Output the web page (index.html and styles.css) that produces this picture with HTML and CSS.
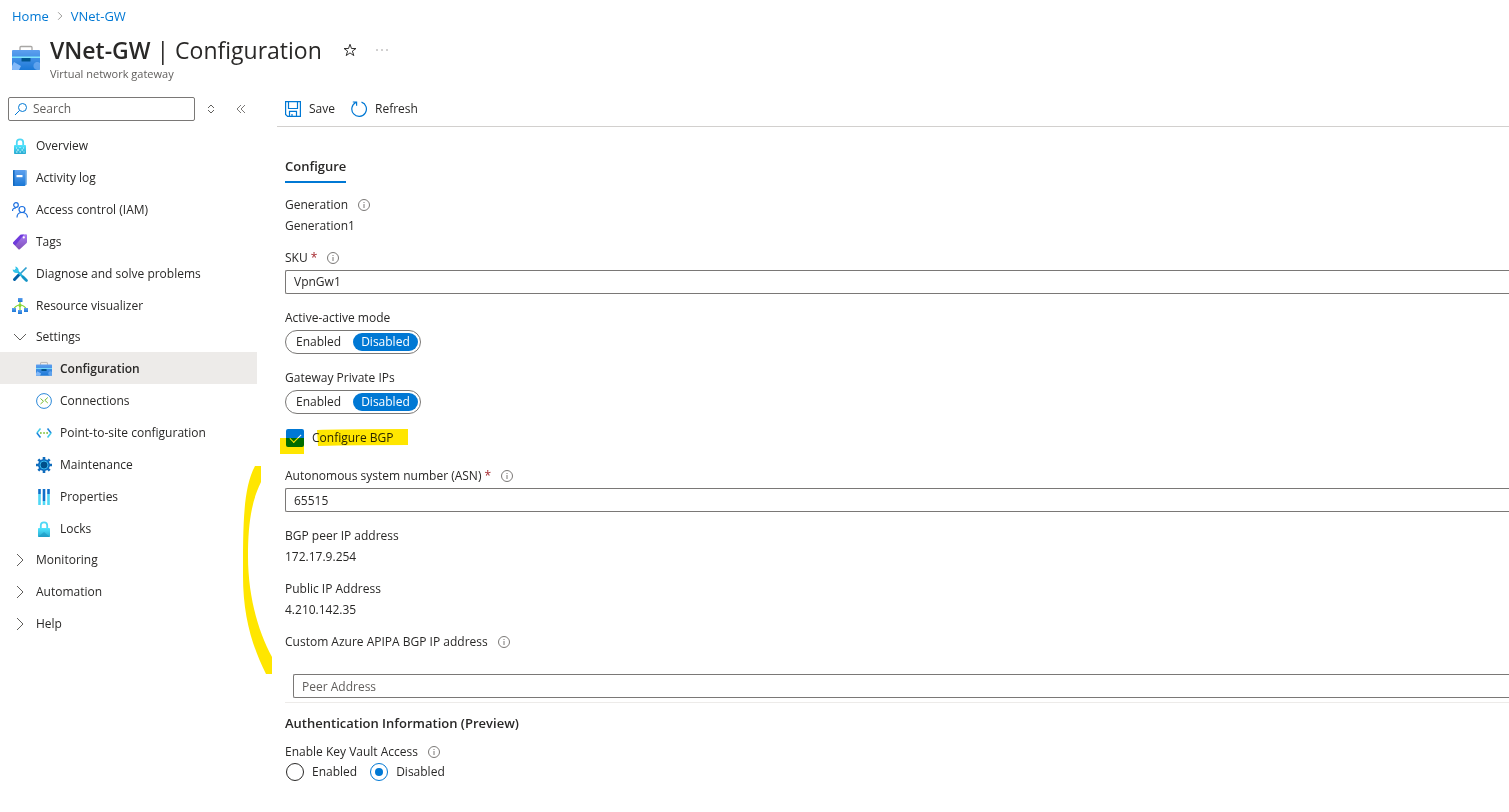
FILE: index.html
```
<!DOCTYPE html>
<html lang="en">
<head>
    <meta charset="UTF-8">
    <meta name="viewport" content="width=device-width, initial-scale=1.0">
    <title>VNet-GW | Configuration</title>
    <link rel="stylesheet" href="styles.css">
</head>
<body>
    <!-- Shared gradients and icons -->
    <svg class="defs" aria-hidden="true">
        <defs>
            <linearGradient id="blue" x1="0" y1="0" x2="0" y2="1">
                <stop offset="0" stop-color="#5ea0ef"/>
                <stop offset="1" stop-color="#1a78d6"/>
            </linearGradient>
            <linearGradient id="cyan" x1="0" y1="0" x2="0" y2="1">
                <stop offset="0" stop-color="#50e6ff"/>
                <stop offset="1" stop-color="#27a9d0"/>
            </linearGradient>
            <linearGradient id="purple" x1="0" y1="0" x2="0" y2="1">
                <stop offset="0" stop-color="#a67af4"/>
                <stop offset="1" stop-color="#8150b8"/>
            </linearGradient>
            <symbol id="toolbox" viewBox="0 0 28 28">
                <path d="M8 7V3.500q0-1 1-1h10q1 0 1 1V7" fill="none" stroke="#a8a6a4" stroke-width="1.300"/>
                <rect x="0" y="6" width="28" height="20" rx="1" fill="url(#blue)"/>
                <path d="M0 12.500h28v1.500H0z" fill="#7fe4fb"/>
                <rect x="9.500" y="14" width="9" height="3.500" rx=".5" fill="#00558f"/>
                <path d="M2 18l7 4-2 4H1q-1 0-1-1v-3z" fill="#83b9f9"/>
                <path d="M28 19a4 4 0 1 0-3 7h2q1 0 1-1z" fill="#83b9f9" opacity=".6"/>
            </symbol>
            <symbol id="lock" viewBox="0 0 16 16">
                <path d="M4.800 8V4.500a3.200 3.200 0 0 1 6.400 0V8" fill="none" stroke="#50d8f5" stroke-width="1.800"/>
                <rect x="2" y="7" width="12" height="9" rx=".8" fill="url(#cyan)"/>
            </symbol>
            <symbol id="info" viewBox="0 0 12 12">
                <circle cx="6" cy="6" r="5.500" fill="none" stroke="#7a7876"/>
                <path d="M6 5v4M6 3v1" stroke="#7a7876"/>
            </symbol>
            <symbol id="chevron" viewBox="0 0 16 16">
                <path d="M5 2l6 6-6 6" fill="none" stroke="#605e5c"/>
            </symbol>
        </defs>
    </svg>

    <header class="page-header">
        <nav class="breadcrumb" aria-label="Breadcrumb">
            <a href="#">Home</a>
            <svg class="crumb-arrow"><use href="#chevron"/></svg>
            <a href="#">VNet-GW</a>
        </nav>
        <div class="title-row">
            <svg class="title-icon"><use href="#toolbox"/></svg>
            <div>
                <h1><b>VNet-GW</b> | Configuration</h1>
                <p class="subtitle">Virtual network gateway</p>
            </div>
            <div class="title-actions">
                <button type="button" class="icon-button" aria-label="Add to favorites">
                    <svg width="14" height="14" viewBox="0 0 14 14"><path d="M7 1.300l1.500 4.200H13L9.400 8.100l1.400 4.500L7 9.900l-3.800 2.700 1.400-4.500L1 5.500h4.500z" fill="none" stroke="#323130"/></svg>
                </button>
                <button type="button" class="icon-button" aria-label="More actions">
                    <svg width="14" height="14" viewBox="0 0 14 14"><path d="M1.500 7h1M6.500 7h1M11.500 7h1" stroke="#484644"/></svg>
                </button>
            </div>
        </div>
    </header>

    <div class="layout">
        <aside class="sidebar">
            <div class="search-row">
                <div class="search-box">
                    <svg width="14" height="14" viewBox="0 0 14 14"><circle cx="8.500" cy="5.500" r="4" fill="none" stroke="#0078d4"/><path d="M5.500 8.500L1 13" stroke="#0078d4"/></svg>
                    <input type="text" placeholder="Search" aria-label="Search menu">
                </div>
                <button type="button" class="icon-button" aria-label="Expand or collapse all">
                    <svg width="10" height="10" viewBox="0 0 10 10"><path d="M2 4l3-3 3 3M2 6l3 3 3-3" fill="none" stroke="#605e5c"/></svg>
                </button>
                <button type="button" class="icon-button" aria-label="Hide menu">
                    <svg width="10" height="10" viewBox="0 0 10 10"><path d="M5 1L1 5l4 4M9 1L5 5l4 4" fill="none" stroke="#7a7876"/></svg>
                </button>
            </div>

            <nav class="menu" aria-label="Resource menu">
                <a href="#" class="menu-item">
                    <svg class="icon" viewBox="0 0 16 16"><use href="#lock"/><path d="M4 10h1M7.500 9.500h1M11 10h1M5 12h2M9.500 12h1.500M4 14h1.500M7.500 14h1.500M11.500 14h1" stroke="#d8f7ff" stroke-width="1.200"/></svg>
                    Overview
                </a>
                <a href="#" class="menu-item">
                    <svg class="icon" viewBox="0 0 16 16"><rect x="3" width="12" height="15" rx="1" fill="#87b9e8"/><rect x="1" y="0" width="12.500" height="16" rx="1" fill="url(#blue)"/><path d="M1 1q0-1 1-1h.5v16H2q-1 0-1-1z" fill="#1067bd"/><rect x="4.500" y="5" width="6" height="2.200" fill="#fff"/></svg>
                    Activity log
                </a>
                <a href="#" class="menu-item">
                    <svg class="icon" viewBox="0 0 16 16" fill="none" stroke="#1b6fe0" stroke-width="1.200"><circle cx="4" cy="3" r="2.300"/><path d="M.5 9c0-2 1.500-3.200 3.500-3.200"/><circle cx="10" cy="7.500" r="3"/><path d="M5 15.500c0-3 2-5 5-5s5.300 2 5.500 5"/></svg>
                    Access control (IAM)
                </a>
                <a href="#" class="menu-item">
                    <svg class="icon" viewBox="0 0 16 16"><path d="M8.500.8L14 .3q1 0 1 1v6.500q0 1-.6 1.500l-6.600 6q-.7.6-1.400-.1L1.300 9.700q-.6-.7 0-1.400z" fill="url(#purple)"/><path d="M8.500.8L12 .5 3.300 11.600 1.300 9.700q-.6-.7 0-1.400z" fill="#6f3bdc"/><circle cx="11.800" cy="3.400" r="1.100" fill="#fff"/></svg>
                    Tags
                </a>
                <a href="#" class="menu-item">
                    <svg class="icon" viewBox="0 0 16 16"><path d="M14.500 1.500l-12 12" stroke="#2f9fd0" stroke-width="1.700"/><path d="M6.500 9.300L2.500 13.500" stroke="#0061a8" stroke-width="3" stroke-linecap="round"/><path d="M4 4l9.500 9.500" stroke="#24b5e0" stroke-width="2.300" stroke-linecap="round"/><path d="M.6 3.500l2.700.4.600-.7L3.300.6a4 4 0 0 1 3.300 4.800l-1.500 1.500A4 4 0 0 1 .6 3.500z" fill="#35c5ea"/><path d="M11 11l3.500 3.500" stroke="#1494c5" stroke-width="2.600" stroke-linecap="round"/></svg>
                    Diagnose and solve problems
                </a>
                <a href="#" class="menu-item">
                    <svg class="icon" viewBox="0 0 16 16"><path d="M8 4v9M2 11q1-3 6-4.500Q13 8 14 11" fill="none" stroke="#86d633" stroke-width="1.300"/><circle cx="8" cy="7.500" r="1.500" fill="#86d633"/><rect x="6" y="0" width="4.500" height="4" fill="url(#blue)"/><rect x="0" y="10" width="4" height="4" fill="url(#blue)"/><rect x="6" y="12" width="4" height="4" fill="url(#blue)"/><rect x="12" y="10" width="4" height="4" fill="url(#blue)"/></svg>
                    Resource visualizer
                </a>

                <button type="button" class="menu-item group" aria-expanded="true">
                    <svg class="icon open"><use href="#chevron"/></svg>
                    Settings
                </button>
                <div class="submenu">
                    <a href="#" class="menu-item active" aria-current="page">
                        <svg class="icon"><use href="#toolbox"/></svg>
                        Configuration
                    </a>
                    <a href="#" class="menu-item">
                        <svg class="icon" viewBox="0 0 16 16" fill="none"><circle cx="8" cy="8" r="7.400" stroke="#2b88d8"/><path d="M4.500 5.500l3 2.800-3 2.700M11.800 4.500l-3 2.800 3 2.700" stroke="#76bc2d"/></svg>
                        Connections
                    </a>
                    <a href="#" class="menu-item">
                        <svg class="icon" viewBox="0 0 16 16" fill="none"><path d="M4.500 3.500L.9 8" stroke="#45cce8" stroke-width="1.600"/><path d="M.9 8l3.600 4.500" stroke="#1c84dc" stroke-width="1.600"/><path d="M11.500 3.500L15.100 8" stroke="#1c84dc" stroke-width="1.600"/><path d="M15.100 8l-3.600 4.500" stroke="#45cce8" stroke-width="1.600"/><path d="M4 8h1.700M7.200 8h1.700M10.300 8H12" stroke="#76bc2d" stroke-width="1.700"/></svg>
                        Point-to-site configuration
                    </a>
                    <a href="#" class="menu-item">
                        <svg class="icon" viewBox="0 0 16 16"><path d="M8 0v16M0 8h16M2.300 2.300l11.400 11.400M13.700 2.300L2.300 13.700" stroke="#0f6cbd" stroke-width="2.600"/><circle cx="8" cy="8" r="6" fill="#0f6cbd"/><circle cx="8" cy="8" r="4" fill="#004f8a" stroke="#35b8ee"/></svg>
                        Maintenance
                    </a>
                    <a href="#" class="menu-item">
                        <svg class="icon" viewBox="0 0 16 16"><path d="M3.500 5v11M8 12v4M12.500 5v11" stroke="#50d8f5" stroke-width="2.600"/><path d="M3.500 0v5M8 0v12M12.500 0v5" stroke="#0f70ca" stroke-width="2.600"/></svg>
                        Properties
                    </a>
                    <a href="#" class="menu-item">
                        <svg class="icon" viewBox="0 0 16 16"><use href="#lock"/><path d="M2 16l6-5 6 5z" fill="#168fbb" opacity=".5"/></svg>
                        Locks
                    </a>
                </div>
                <button type="button" class="menu-item group" aria-expanded="false">
                    <svg class="icon"><use href="#chevron"/></svg>
                    Monitoring
                </button>
                <button type="button" class="menu-item group" aria-expanded="false">
                    <svg class="icon"><use href="#chevron"/></svg>
                    Automation
                </button>
                <button type="button" class="menu-item group" aria-expanded="false">
                    <svg class="icon"><use href="#chevron"/></svg>
                    Help
                </button>
            </nav>
        </aside>

        <main class="content">
            <div class="toolbar">
                <button type="button" class="command">
                    <svg class="icon" viewBox="0 0 16 16" fill="none" stroke="#0078d4" stroke-width="1.200"><path d="M.6.600h14.800v14.800H2.600l-2-2z"/><path d="M3.500.6v6.900h9V.6M4.500 15.400v-5h7v5M7 15.400v-2.500"/></svg>
                    Save
                </button>
                <button type="button" class="command">
                    <svg class="icon" viewBox="0 0 16 16" fill="none" stroke="#0078d4" stroke-width="1.200"><path d="M10.500 1.100A7.300 7.300 0 1 1 4.800 1.500M1.800 1h3.800v3.800"/></svg>
                    Refresh
                </button>
            </div>

            <form class="form">
                <h2 class="tab">Configure</h2>

                <div class="field static">
                    <div class="label">Generation <svg class="info"><use href="#info"/></svg></div>
                    <div class="value">Generation1</div>
                </div>

                <div class="field">
                    <div class="label"><label for="sku">SKU <span class="required">*</span></label> <svg class="info"><use href="#info"/></svg></div>
                    <select id="sku" class="box"><option>VpnGw1</option></select>
                </div>

                <fieldset class="field">
                    <legend class="label">Active-active mode</legend>
                    <div class="toggle">
                        <label><input type="radio" name="active">Enabled</label>
                        <label><input type="radio" name="active" checked>Disabled</label>
                    </div>
                </fieldset>

                <fieldset class="field">
                    <legend class="label">Gateway Private IPs</legend>
                    <div class="toggle">
                        <label><input type="radio" name="private">Enabled</label>
                        <label><input type="radio" name="private" checked>Disabled</label>
                    </div>
                </fieldset>

                <div class="check-row">
                    <label class="check"><input type="checkbox" checked> Configure BGP</label>
                    <!-- Marker pen highlights -->
                    <svg class="marker marker-check" viewBox="0 0 128 26"><path d="M0 10h24v16H0zM37 2q20-1 91-1v16q-50 0-90 1z"/></svg>
                </div>

                <div class="bgp">
                    <svg class="marker marker-bracket" viewBox="0 0 30 208"><path d="M12 0h6v16C8 36 5 60 5 90c0 40 10 75 24 101v17h-6C9 180 0 150 0 110C0 60 0 22 12 0z"/></svg>
                    <div class="field">
                        <div class="label"><label for="asn">Autonomous system number (ASN) <span class="required">*</span></label> <svg class="info"><use href="#info"/></svg></div>
                        <input type="text" id="asn" class="box" value="65515">
                    </div>
                    <div class="field static">
                        <div class="label">BGP peer IP address</div>
                        <div class="value">172.17.9.254</div>
                    </div>
                    <div class="field static">
                        <div class="label">Public IP Address</div>
                        <div class="value">4.210.142.35</div>
                    </div>
                    <div class="peer">
                        <div class="label"><label for="peer">Custom Azure APIPA BGP IP address</label> <svg class="info"><use href="#info"/></svg></div>
                        <input type="text" id="peer" class="box" placeholder="Peer Address">
                    </div>
                </div>

                <h3>Authentication Information (Preview)</h3>
                <fieldset>
                    <legend class="label">Enable Key Vault Access <svg class="info"><use href="#info"/></svg></legend>
                    <div class="radios">
                        <label><input type="radio" name="vault"> Enabled</label>
                        <label><input type="radio" name="vault" checked> Disabled</label>
                    </div>
                </fieldset>
            </form>
        </main>
    </div>
</body>
</html>
```
FILE: styles.css
```
* {
    box-sizing: border-box;
}

body {
    margin: 0;
    background: #fff;
    color: #292827;
    font: 12px/20px "Open Sans", "Noto Sans", sans-serif;
    overflow-x: hidden;
}

button, input, select {
    font: inherit;
    color: inherit;
}

button {
    padding: 0;
    border: 0;
    background: none;
    cursor: pointer;
}

h1, h2, h3, p, fieldset, legend {
    margin: 0;
    padding: 0;
    border: 0;
}

svg {
    flex: none;
}

.defs {
    position: absolute;
    width: 0;
    height: 0;
}

.icon {
    width: 16px;
    height: 16px;
}

/* Header */
.page-header {
    padding: 6px 12px 0;
}

.breadcrumb {
    display: flex;
    align-items: center;
    gap: 6px;
    font-size: 13px;
}

.breadcrumb a {
    color: #0078d4;
    text-decoration: none;
}

.crumb-arrow {
    width: 10px;
    height: 16px;
}

.title-row {
    display: flex;
    gap: 10px;
    padding-top: 8px;
}

.title-icon {
    width: 28px;
    height: 28px;
    margin-top: 10px;
}

h1 {
    font-size: 23px;
    font-weight: 400;
    line-height: 32px;
}

h1 b {
    font-weight: 600;
}

.subtitle {
    font-size: 11px;
    line-height: 16px;
    color: #605e5c;
}

.title-actions {
    display: flex;
    gap: 16px;
    height: 32px;
    padding-left: 10px;
}

.icon-button {
    display: flex;
    align-items: center;
    justify-content: center;
    width: 16px;
}

.layout {
    display: grid;
    grid-template-columns: 257px 1fr;
    column-gap: 20px;
    padding-top: 10px;
}

/* Sidebar */
.search-row {
    display: flex;
    gap: 14px;
    padding: 5px 8px 8px;
}

.search-box {
    display: flex;
    align-items: center;
    gap: 5px;
    flex: 1;
    height: 24px;
    margin-right: -6px;
    padding-left: 5px;
    border: 1px solid #7a7876;
    border-radius: 2px;
}

.search-box input {
    width: 100%;
    min-width: 0;
    padding: 0;
    border: 0;
    outline: 0;
}

::placeholder {
    color: #605e5c;
    opacity: 1;
}

.menu-item {
    display: flex;
    align-items: center;
    gap: 8px;
    width: 100%;
    height: 32px;
    padding: 1px 0 0 12px;
    color: inherit;
    text-decoration: none;
}

.menu-item.group {
    padding-top: 0;
}

.submenu {
    margin-top: -1px;
}

.submenu .menu-item {
    padding: 2px 0 0 36px;
}

.menu-item.active {
    background: #edebe9;
    font-weight: 600;
}

.open {
    transform: rotate(90deg);
}

/* Toolbar */
.toolbar {
    display: flex;
    gap: 16px;
    height: 35px;
    padding-left: 8px;
    border-bottom: 1px solid #d2d0ce;
}

.command {
    display: flex;
    align-items: center;
    gap: 8px;
    height: 34px;
}

/* Form */
.form {
    padding: 29px 0 30px 8px;
}

.tab {
    width: max-content;
    margin-bottom: 12px;
    padding-bottom: 5px;
    border-bottom: 2px solid #0078d4;
    font-size: 13px;
    font-weight: 600;
}

.field {
    margin-bottom: 14px;
}

.field.static {
    margin-bottom: 12px;
}

.label {
    display: flex;
    align-items: center;
    gap: 10px;
    height: 20px;
}

.required {
    color: #a4262c;
}

.info {
    width: 12px;
    height: 12px;
}

.value {
    line-height: 21px;
}

.box {
    display: block;
    width: 100%;
    height: 24px;
    margin-top: 2px;
    padding: 0 8px;
    border: 1px solid #7a7876;
    border-right: 0;
    border-radius: 2px 0 0 2px;
    background: #fff;
    appearance: none;
}

.toggle {
    display: flex;
    gap: 4px;
    width: max-content;
    height: 24px;
    margin-top: 2px;
    padding: 2px;
    border: 1px solid #7a7876;
    border-radius: 12px;
}

.toggle label {
    padding: 0 8px;
    border-radius: 9px;
    line-height: 18px;
}

.toggle label:has(:checked) {
    background: #0078d4;
    color: #fff;
}

.toggle input {
    position: absolute;
    opacity: 0;
}

.check-row {
    position: relative;
    margin-bottom: 18px;
}

.check,
.radios label {
    display: flex;
    align-items: center;
    gap: 8px;
    width: max-content;
}

.check input,
.radios input {
    display: grid;
    place-items: center;
    width: 18px;
    height: 18px;
    margin: 0 0 0 1px;
    appearance: none;
}

.check input {
    border-radius: 2px;
    background: #0078d4;
}

.check input:checked::after {
    content: "";
    width: 10px;
    height: 5px;
    border: solid #fff;
    border-width: 0 0 1px 1px;
    transform: translateY(-1px) rotate(-45deg);
}

.radios {
    display: flex;
    gap: 12px;
}

.radios input {
    border: 1px solid #292827;
    border-radius: 50%;
}

.radios input:checked {
    border-color: #0078d4;
}

.radios input:checked::after {
    content: "";
    width: 8px;
    height: 8px;
    border-radius: 50%;
    background: #0078d4;
}

/* Yellow marker strokes drawn over the form */
.marker {
    position: absolute;
    fill: #ffe600;
    mix-blend-mode: multiply;
    pointer-events: none;
}

.marker-check {
    top: 0;
    left: -5px;
    width: 128px;
    height: 26px;
}

.marker-bracket {
    top: 0;
    left: -42px;
    width: 30px;
    height: 208px;
}

.bgp {
    position: relative;
    padding-bottom: 4px;
    border-bottom: 1px solid #edebe9;
}

.peer .box {
    width: calc(100% - 8px);
    margin: 22px 0 0 8px;
}

h3 {
    margin: 10px 0 9px;
    font-size: 13px;
    font-weight: 600;
}
```
